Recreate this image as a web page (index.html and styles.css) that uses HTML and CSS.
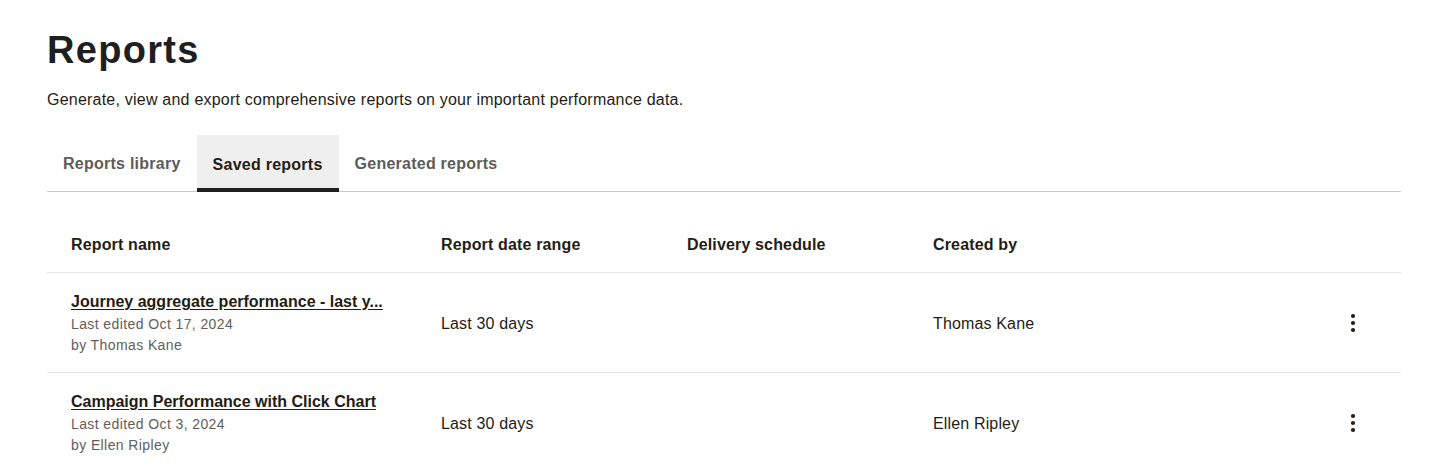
FILE: index.html
```html
<!DOCTYPE html>
<html lang="en">
<head>
<meta charset="utf-8">
<title>Reports</title>
<link rel="stylesheet" href="styles.css">
</head>
<body>
<main class="page">
  <h1 class="title">Reports</h1>
  <p class="subtitle">Generate, view and export comprehensive reports on your important performance data.</p>
  <nav class="tabs">
    <a class="tab">Reports library</a>
    <a class="tab tab-active">Saved reports</a>
    <a class="tab">Generated reports</a>
  </nav>
  <div class="table">
    <div class="row head">
      <div class="cell">Report name</div>
      <div class="cell">Report date range</div>
      <div class="cell">Delivery schedule</div>
      <div class="cell">Created by</div>
      <div class="cell"></div>
    </div>
    <div class="row">
      <div class="cell name">
        <a class="link">Journey aggregate performance - last y...</a>
        <span class="meta">Last edited Oct 17, 2024</span>
        <span class="meta">by Thomas Kane</span>
      </div>
      <div class="cell">Last 30 days</div>
      <div class="cell"></div>
      <div class="cell">Thomas Kane</div>
      <div class="cell action">
        <svg class="kebab" width="6" height="20" viewBox="0 0 6 20"><circle cx="3" cy="3" r="2.1"/><circle cx="3" cy="10" r="2.1"/><circle cx="3" cy="17" r="2.1"/></svg>
      </div>
    </div>
    <div class="row">
      <div class="cell name">
        <a class="link">Campaign Performance with Click Chart</a>
        <span class="meta">Last edited Oct 3, 2024</span>
        <span class="meta">by Ellen Ripley</span>
      </div>
      <div class="cell">Last 30 days</div>
      <div class="cell"></div>
      <div class="cell">Ellen Ripley</div>
      <div class="cell action">
        <svg class="kebab" width="6" height="20" viewBox="0 0 6 20"><circle cx="3" cy="3" r="2.1"/><circle cx="3" cy="10" r="2.1"/><circle cx="3" cy="17" r="2.1"/></svg>
      </div>
    </div>
  </div>
</main>
</body>
</html>
```

FILE: styles.css
```css
html, body {
  margin: 0;
  background: #ffffff;
}
body {
  font-family: "Liberation Sans", Arial, sans-serif;
  color: #241c15;
}
.page {
  padding: 28px 49px 0 47px;
}
.title {
  margin: 0;
  font-size: 38px;
  line-height: 44px;
  font-weight: 700;
  color: #1e1f21;
  letter-spacing: 1.3px;
}
.subtitle {
  margin: 16px 0 0;
  font-size: 16px;
  line-height: 24px;
  letter-spacing: 0.22px;
  color: #241c15;
}
.tabs {
  display: flex;
  margin-top: 23px;
  border-bottom: 1px solid #c9c9c9;
}
.tab {
  display: flex;
  align-items: center;
  height: 56px;
  box-sizing: border-box;
  padding: 5px 16px 0;
  border-bottom: 4px solid transparent;
  font-size: 16px;
  font-weight: 700;
  letter-spacing: 0.25px;
  color: #5c5c5c;
  cursor: pointer;
}
.tab-active {
  background: #efefef;
  color: #241c15;
  border-bottom-color: #1f1f22;
  margin-bottom: -1px;
  height: 57px;
  padding-top: 6px;
}
.table {
  margin-top: 24px;
}
.row {
  display: grid;
  grid-template-columns: 370px 246px 246px 1fr 98px;
  align-items: center;
  border-bottom: 1px solid #e4e4e4;
  min-height: 99px;
  font-size: 16px;
}
.row.head {
  min-height: 56px;
  font-weight: 700;
}
.cell {
  padding: 0 24px;
  letter-spacing: 0.15px;
}
.row.head .cell {
  padding-top: 2px;
}
.row:not(.head) .cell {
  padding-top: 2px;
}
.row:not(.head) .cell.name {
  padding-top: 17px;
  padding-bottom: 16px;
}
.name {
  display: flex;
  flex-direction: column;
}
.link {
  font-weight: 700;
  line-height: 24px;
  letter-spacing: 0;
  text-decoration: underline;
  text-underline-offset: 2px;
  color: #241c15;
  white-space: nowrap;
  cursor: pointer;
}
.meta {
  font-size: 14px;
  line-height: 21px;
  letter-spacing: 0.4px;
  color: #5e5e5e;
}
.row:not(.head) .cell.action {
  display: flex;
  justify-content: center;
  padding: 0 0 0 1px;
}
.kebab {
  fill: #241c15;
}
```
